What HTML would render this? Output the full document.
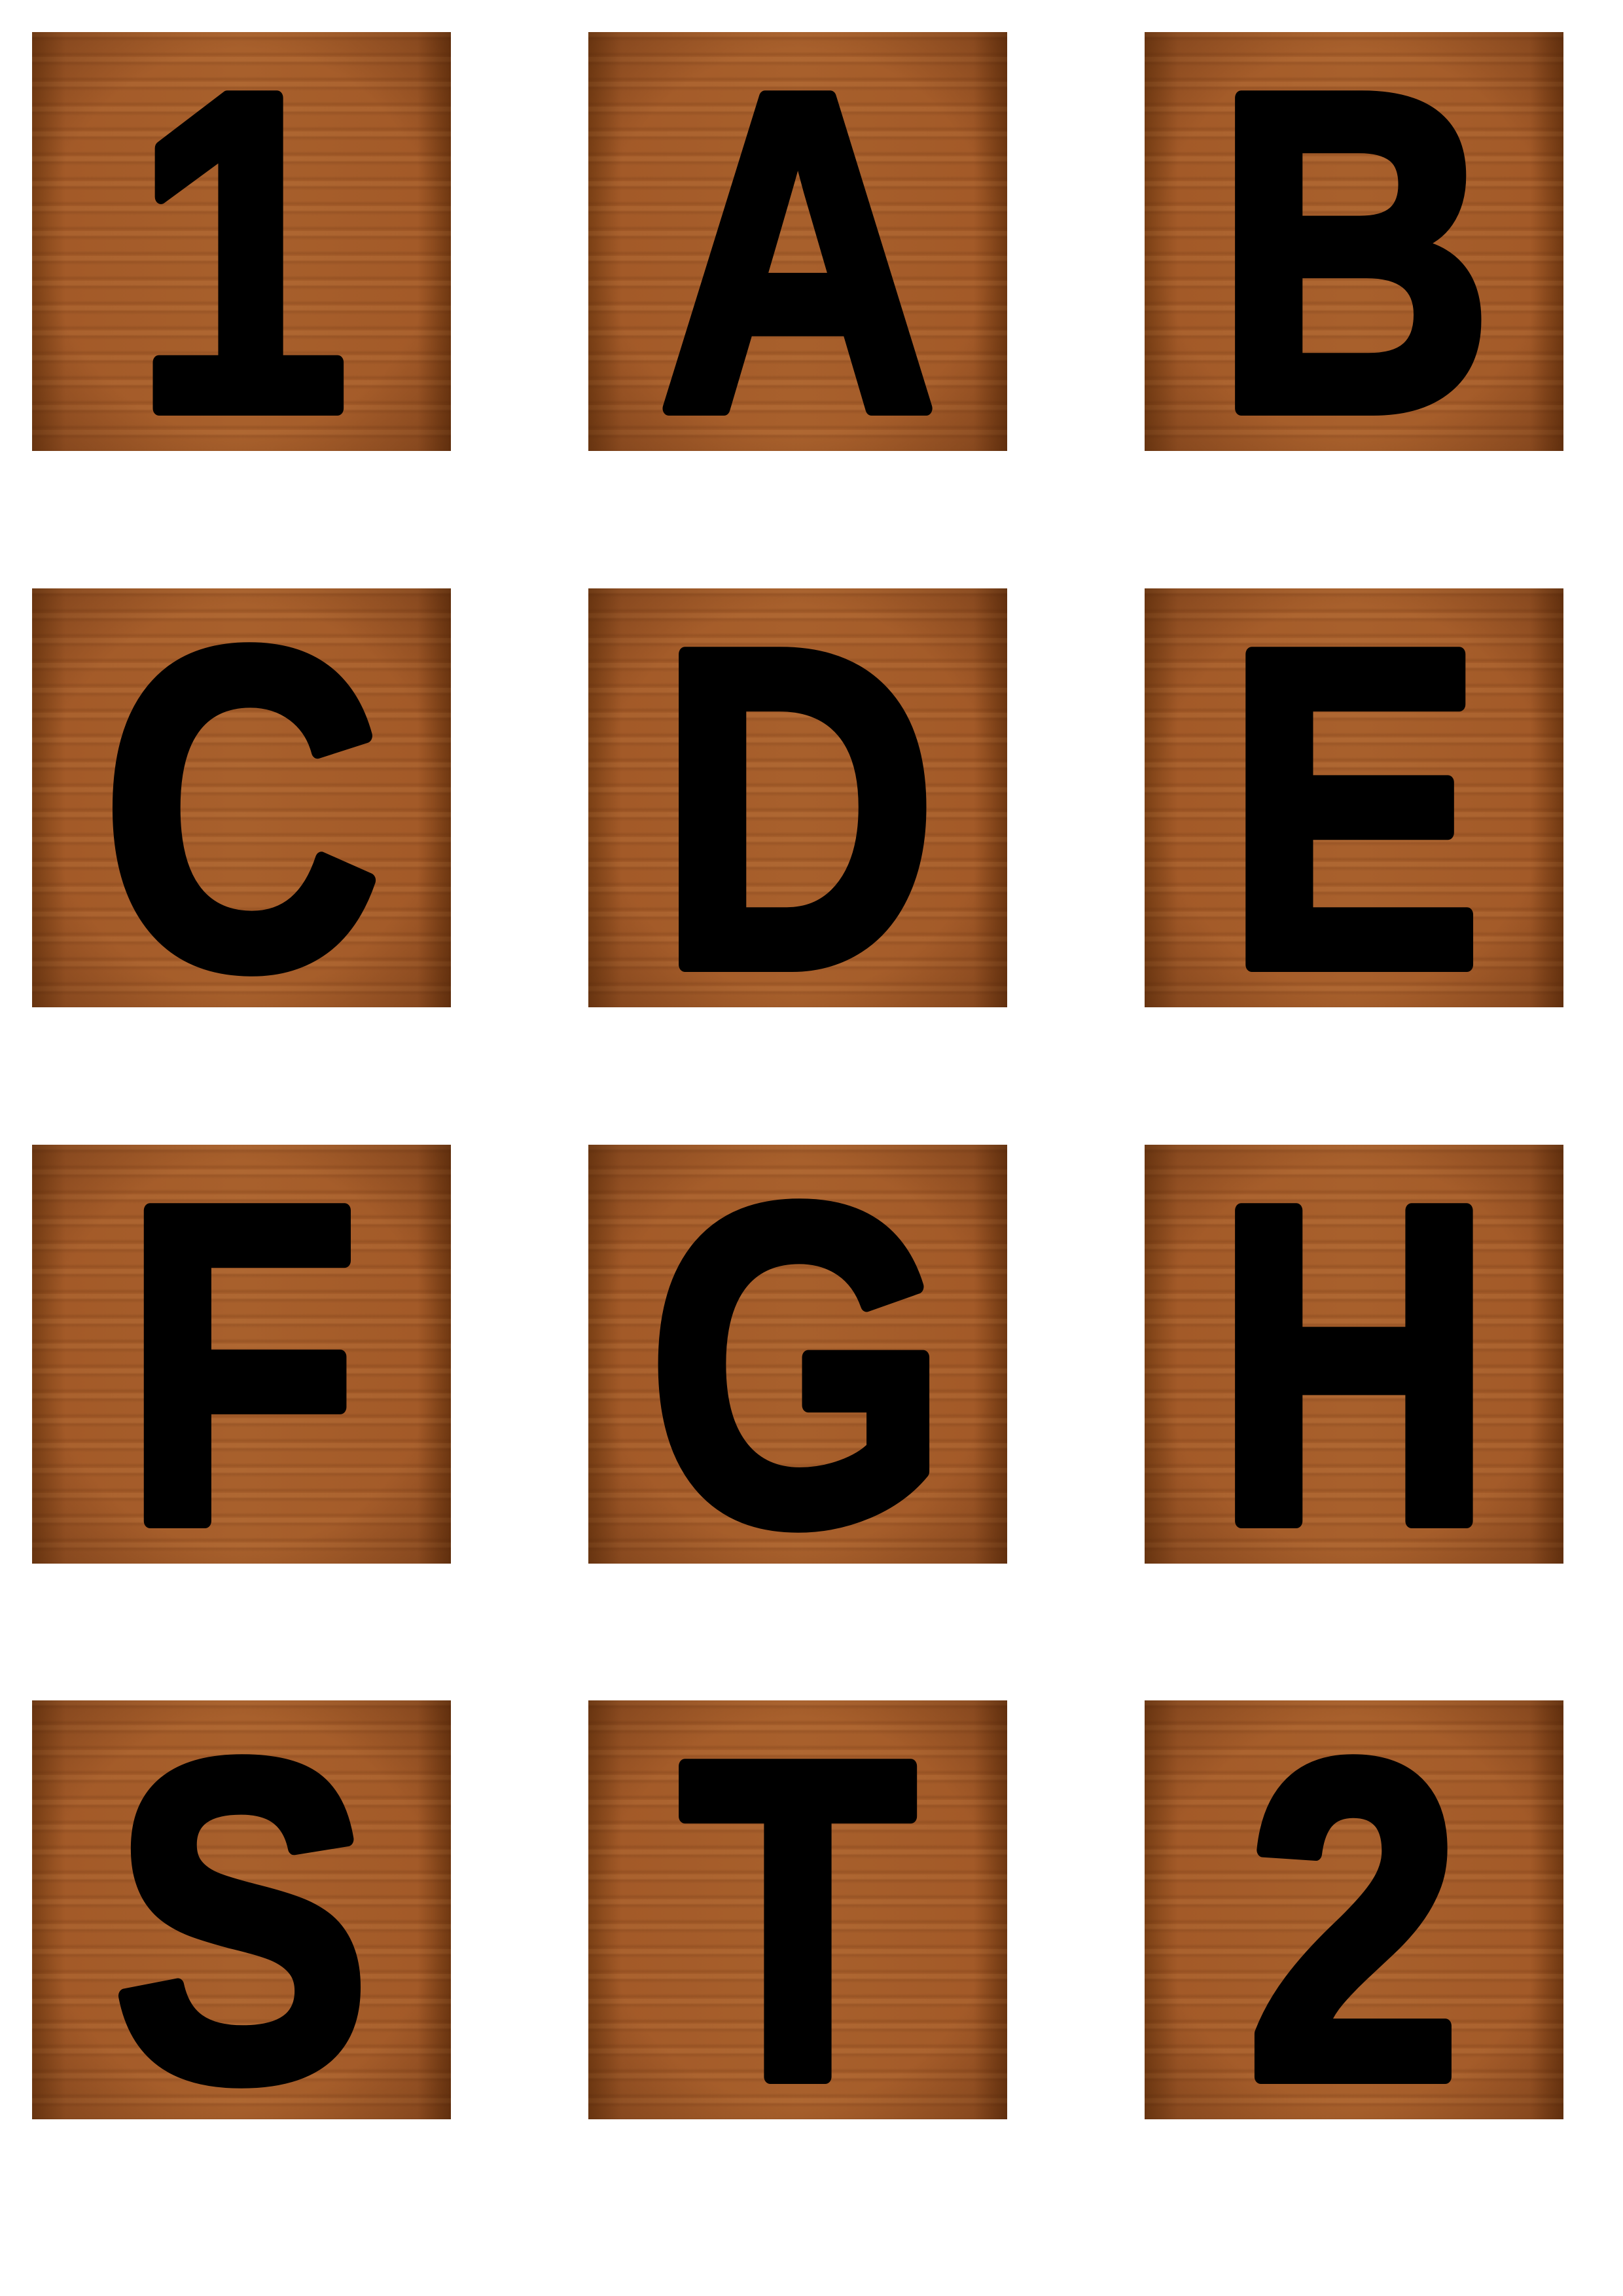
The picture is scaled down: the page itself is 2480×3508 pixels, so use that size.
<!DOCTYPE html>
<html><head><meta charset="utf-8">
<style>
html,body{margin:0;padding:0;background:#fff;}
body{width:2480px;height:3508px;position:relative;overflow:hidden;}
.t{position:absolute;width:640px;height:640px;
background:
 radial-gradient(ellipse at 50% 50%, rgba(0,0,0,0) 65%, rgba(60,25,5,0.35) 100%),
 repeating-linear-gradient(180deg, rgba(255,190,120,0.08) 0px, rgba(255,190,120,0.08) 6px, rgba(80,35,10,0.15) 9px, rgba(0,0,0,0) 14px, rgba(0,0,0,0) 30px, rgba(90,40,10,0.18) 34px, rgba(0,0,0,0) 38px),
 linear-gradient(90deg,#7e4216 0%,#a35a28 8%,#a8602c 50%,#a35a28 92%,#733a12 100%);
}
.t svg{position:absolute;left:0;top:0;}
.t text{font-family:"Liberation Sans",sans-serif;font-weight:bold;font-size:690px;fill:#000;stroke:#000;stroke-width:22;stroke-linejoin:round;stroke-linecap:round;}
</style></head><body>
<div class="t" style="left:49px;top:49px"><svg width="640" height="640"><text transform="translate(320,0) scale(0.85,1)" x="0" y="575" text-anchor="middle">1</text></svg></div>
<div class="t" style="left:899px;top:49px"><svg width="640" height="640"><text transform="translate(320,0) scale(0.85,1)" x="0" y="575" text-anchor="middle">A</text></svg></div>
<div class="t" style="left:1749px;top:49px"><svg width="640" height="640"><text transform="translate(320,0) scale(0.85,1)" x="0" y="575" text-anchor="middle">B</text></svg></div>
<div class="t" style="left:49px;top:899px"><svg width="640" height="640"><text transform="translate(320,0) scale(0.85,1)" x="0" y="575" text-anchor="middle">C</text></svg></div>
<div class="t" style="left:899px;top:899px"><svg width="640" height="640"><text transform="translate(320,0) scale(0.85,1)" x="0" y="575" text-anchor="middle">D</text></svg></div>
<div class="t" style="left:1749px;top:899px"><svg width="640" height="640"><text transform="translate(320,0) scale(0.85,1)" x="0" y="575" text-anchor="middle">E</text></svg></div>
<div class="t" style="left:49px;top:1749px"><svg width="640" height="640"><text transform="translate(320,0) scale(0.85,1)" x="0" y="575" text-anchor="middle">F</text></svg></div>
<div class="t" style="left:899px;top:1749px"><svg width="640" height="640"><text transform="translate(320,0) scale(0.85,1)" x="0" y="575" text-anchor="middle">G</text></svg></div>
<div class="t" style="left:1749px;top:1749px"><svg width="640" height="640"><text transform="translate(320,0) scale(0.85,1)" x="0" y="575" text-anchor="middle">H</text></svg></div>
<div class="t" style="left:49px;top:2598px"><svg width="640" height="640"><text transform="translate(320,0) scale(0.85,1)" x="0" y="575" text-anchor="middle">S</text></svg></div>
<div class="t" style="left:899px;top:2598px"><svg width="640" height="640"><text transform="translate(320,0) scale(0.85,1)" x="0" y="575" text-anchor="middle">T</text></svg></div>
<div class="t" style="left:1749px;top:2598px"><svg width="640" height="640"><text transform="translate(320,0) scale(0.85,1)" x="0" y="575" text-anchor="middle">2</text></svg></div>
</body></html>
